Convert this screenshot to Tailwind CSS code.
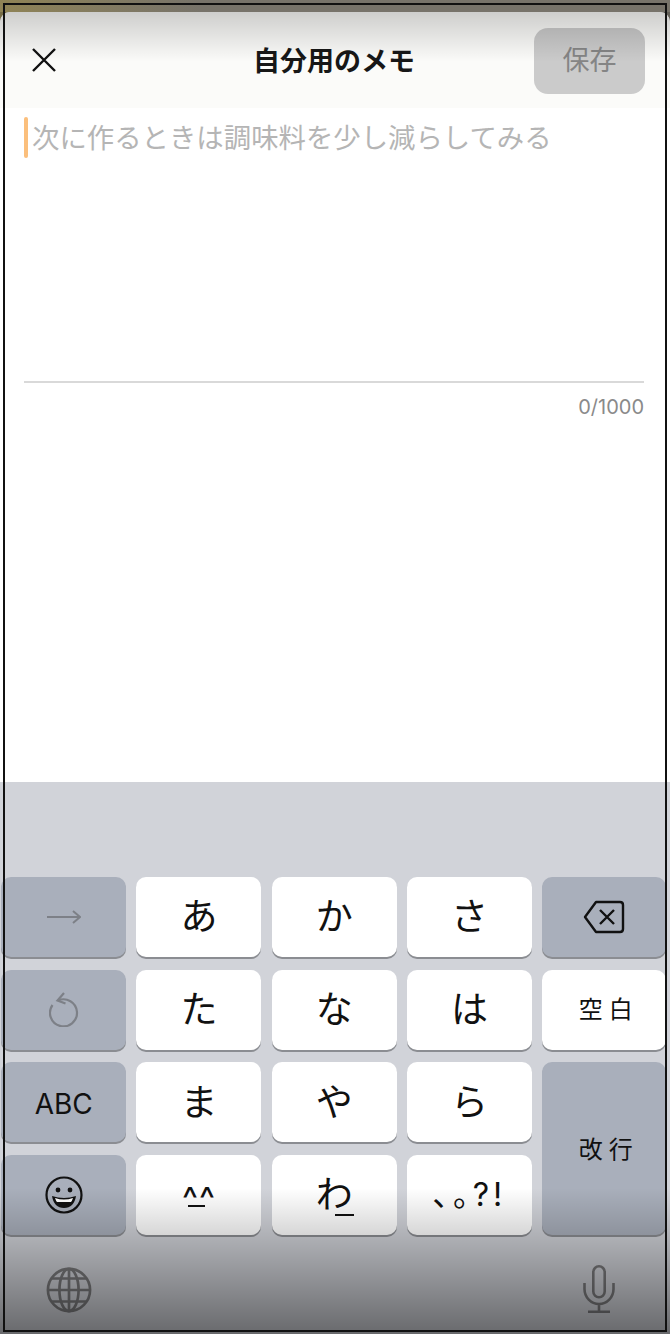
<!DOCTYPE html>
<html lang="ja">
<head>
    <meta charset="UTF-8">
    <meta name="viewport" content="width=device-width, initial-scale=1.0">
    <title>自分用のメモ</title>
    <script src="https://cdn.jsdelivr.net/npm/@tailwindcss/browser@4"></script>
</head>
<body class="bg-white">
    <div class="relative w-[670px] h-[1334px] overflow-hidden bg-gradient-to-r from-[#8f8355] to-[#77736a] to-30% font-['Inter','Noto_Sans_CJK_JP',sans-serif]">
        <!-- sheet -->
        <div class="absolute inset-x-0 top-[12px] bottom-0 flex flex-col rounded-t-[10px] bg-white overflow-hidden">
            <header class="flex h-[96px] shrink-0 items-center justify-between bg-[#fbfbf9] pl-[25px] pr-[25px] pt-[1px]">
                <div class="w-[111px] pl-[3px] -mt-[2px]">
                    <svg class="w-[32px] h-[32px]" viewBox="0 0 32 32" fill="none" stroke="#111" stroke-width="2.4"><path d="M5 5 L27 27 M27 5 L5 27"/></svg>
                </div>
                <h1 class="mt-[4px] -ml-[2px] text-[27px] font-bold text-[#171717]">自分用のメモ</h1>
                <div class="flex h-[66px] w-[111px] items-center justify-center rounded-[14px] bg-[#cbcbcb] pt-[2px] text-[27px] text-[#858585]">保存</div>
            </header>
            <div class="flex-1 bg-white pl-[24px] pr-[26px]">
                <div class="h-[275px] border-b-2 border-[#d9d9d9] relative pt-[11px]">
                    <div class="absolute left-0 top-[9px] h-[41px] w-[4px] rounded-full bg-[#fbbf7c]"></div>
                    <p class="pl-[8px] text-[27.4px] leading-[38px] text-[#b5b5b5]">次に作るときは調味料を少し減らしてみる</p>
                </div>
                <p class="mt-[10px] text-right text-[20px] leading-[28px] text-[#8a8a8a]">0/1000</p>
            </div>
            <!-- keyboard -->
            <div class="h-[552px] shrink-0 bg-[#d1d3d9] pt-[95px]">
                <div class="grid grid-cols-[125px_125px_125px_125px_124px] grid-rows-[80px_80px_80px_80px] gap-x-[10.25px] gap-y-[12.67px] pl-[1.2px] text-[37px] text-[#111]">
                    <div class="flex items-center justify-center rounded-[10px] bg-[#a9afbb] shadow-[0_2px_0_#8b8d92]">
                        <svg class="w-[34px] h-[20px]" viewBox="0 0 34 20" fill="none" stroke="#7d8087" stroke-width="2"><path d="M0 10 H33 M26 4 L33 10 L26 16"/></svg>
                    </div>
                    <div class="flex items-center justify-center rounded-[10px] bg-white shadow-[0_2px_0_#8b8d92]">あ</div>
                    <div class="flex items-center justify-center rounded-[10px] bg-white shadow-[0_2px_0_#8b8d92]">か</div>
                    <div class="flex items-center justify-center rounded-[10px] bg-white shadow-[0_2px_0_#8b8d92]">さ</div>
                    <div class="flex items-center justify-center rounded-[10px] bg-[#a9afbb] shadow-[0_2px_0_#8b8d92]">
                        <svg class="w-[42px] h-[34px]" viewBox="0 0 42 34" fill="none" stroke="#111" stroke-width="2.4" stroke-linejoin="round"><path d="M13 2 H37 Q40 2 40 5 V29 Q40 32 37 32 H13 L2 17 Z"/><path d="M17 10 L31 24 M31 10 L17 24"/></svg>
                    </div>

                    <div class="flex items-center justify-center rounded-[10px] bg-[#a9afbb] shadow-[0_2px_0_#8b8d92]">
                        <svg class="w-[30px] h-[35px]" viewBox="0 0 30 35" fill="none" stroke="#7d8087" stroke-width="2.2"><path d="M9 8.5 A13.5 13.5 0 1 1 3.5 13"/><path d="M15 1 L8.5 8.5 L16.5 11.5"/></svg>
                    </div>
                    <div class="flex items-center justify-center rounded-[10px] bg-white shadow-[0_2px_0_#8b8d92]">た</div>
                    <div class="flex items-center justify-center rounded-[10px] bg-white shadow-[0_2px_0_#8b8d92]">な</div>
                    <div class="flex items-center justify-center rounded-[10px] bg-white shadow-[0_2px_0_#8b8d92]">は</div>
                    <div class="flex items-center justify-center rounded-[10px] bg-white pl-[9px] text-[24px] tracking-[6px] shadow-[0_2px_0_#8b8d92]">空白</div>

                    <div class="flex items-center justify-center rounded-[10px] bg-[#a9afbb] pt-[3px] text-[28px] shadow-[0_2px_0_#8b8d92]">ABC</div>
                    <div class="flex items-center justify-center rounded-[10px] bg-white shadow-[0_2px_0_#8b8d92]">ま</div>
                    <div class="flex items-center justify-center rounded-[10px] bg-white shadow-[0_2px_0_#8b8d92]">や</div>
                    <div class="flex items-center justify-center rounded-[10px] bg-white shadow-[0_2px_0_#8b8d92]">ら</div>
                    <div class="row-span-2 flex items-center justify-center rounded-[10px] bg-[#a9afbb] pl-[9px] pt-[2px] text-[24px] tracking-[6px] shadow-[0_2px_0_#8b8d92]">改行</div>

                    <div class="flex items-center justify-center rounded-[10px] bg-[#a9afbb] shadow-[0_2px_0_#8b8d92]">
                        <svg class="w-[38px] h-[38px]" viewBox="0 0 38 38" fill="none" stroke="#111" stroke-width="2.2"><circle cx="19" cy="19" r="17.5"/><circle cx="13" cy="14" r="2.4" fill="#111" stroke="none"/><circle cx="25" cy="14" r="2.4" fill="#111" stroke="none"/><path d="M7 20 Q19 24 31 20 Q29 32 19 32 Q9 32 7 20 Z" fill="#111" stroke="none"/><path d="M10 22 Q19 25 28 22 Q27 25 26 26 H12 Q11 25 10 22 Z" fill="#fff" stroke="none"/></svg>
                    </div>
                    <div class="flex items-center justify-center rounded-[10px] bg-white shadow-[0_2px_0_#8b8d92]">
                        <span class="relative mt-[8px] text-[34px] leading-none tracking-[1px]">^^<span class="absolute left-[6px] top-[23px] h-[2px] w-[17px] bg-[#111]"></span></span>
                    </div>
                    <div class="flex items-center justify-center rounded-[10px] bg-white shadow-[0_2px_0_#8b8d92]">
                        <span class="relative leading-none">わ<span class="absolute left-[19px] top-[38px] h-[2px] w-[19px] bg-[#111]"></span></span>
                    </div>
                    <div class="flex items-center justify-center rounded-[10px] bg-white text-[32px] tracking-[4px] [font-feature-settings:'palt'] shadow-[0_2px_0_#8b8d92]">、。?!</div>
                </div>
                <div class="flex items-start justify-between pl-[46px] pr-[55px] pt-[32px]">
                    <svg class="w-[46px] h-[46px]" viewBox="0 0 48 48" fill="none" stroke="#7a7a7c" stroke-width="2.8"><circle cx="24" cy="24" r="22"/><ellipse cx="24" cy="24" rx="10" ry="22"/><path d="M24 2 V46 M2 24 H46 M6 12 H42 M6 36 H42"/></svg>
                    <svg class="w-[32px] h-[48px] -mt-[2px]" viewBox="0 0 32 48" fill="none" stroke="#7a7a7c" stroke-width="2.6"><rect x="10.3" y="1.3" width="11.4" height="31" rx="5.7"/><path d="M1.5 18 V24 A14.5 15 0 0 0 30.5 24 V18 M16 39 V46 M5 46.7 H27"/></svg>
                </div>
            </div>
        </div>
        <!-- scrims over top and bottom of the sheet -->
        <div class="pointer-events-none absolute inset-x-0 top-[12px] h-[50px] bg-gradient-to-b from-black/18 to-transparent"></div>
        <div class="pointer-events-none absolute inset-x-0 bottom-0 h-[146px] bg-gradient-to-b from-transparent to-black/50"></div>
        <!-- frame -->
        <div class="pointer-events-none absolute top-[3px] left-[3px] right-[3px] bottom-[2px] border-2 border-[#111]"></div>
    </div>
</body>
</html>
